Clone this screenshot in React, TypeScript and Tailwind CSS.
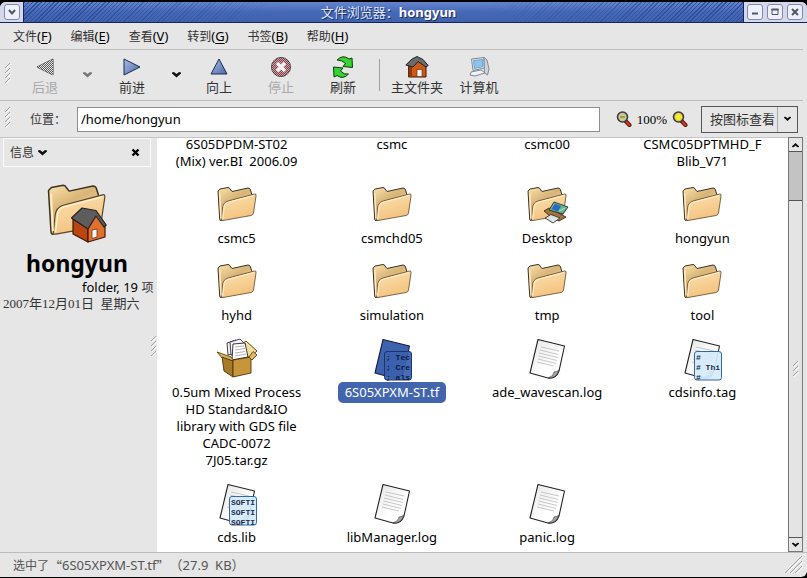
import React from "react";

type Kind = "folder" | "desktop" | "package" | "doc" | "tf" | "tag" | "lib";
type Entry = { name: string; kind: Kind; selected?: boolean };

const ENTRIES: Entry[] = [
  { name: "6S05DPDM-ST02\n(Mix) ver.BI  2006.09", kind: "folder" },
  { name: "csmc", kind: "folder" },
  { name: "csmc00", kind: "folder" },
  { name: "CSMC05DPTMHD_F\nBlib_V71", kind: "folder" },
  { name: "csmc5", kind: "folder" },
  { name: "csmchd05", kind: "folder" },
  { name: "Desktop", kind: "desktop" },
  { name: "hongyun", kind: "folder" },
  { name: "hyhd", kind: "folder" },
  { name: "simulation", kind: "folder" },
  { name: "tmp", kind: "folder" },
  { name: "tool", kind: "folder" },
  { name: "0.5um Mixed Process\nHD Standard&IO\nlibrary with GDS file\nCADC-0072\n7J05.tar.gz", kind: "package" },
  { name: "6S05XPXM-ST.tf", kind: "tf", selected: true },
  { name: "ade_wavescan.log", kind: "doc" },
  { name: "cdsinfo.tag", kind: "tag" },
  { name: "cds.lib", kind: "lib" },
  { name: "libManager.log", kind: "doc" },
  { name: "panic.log", kind: "doc" },
];

const MENUS = [
  ["文件", "F"],
  ["编辑", "E"],
  ["查看", "V"],
  ["转到", "G"],
  ["书签", "B"],
  ["帮助", "H"],
];

function FolderShape() {
  return (
    <g strokeLinejoin="round" strokeWidth="1">
      <path d="M1 5 L3 3 L11 1.500 Q12.500 1.500 13 3 L15 5.500 L31 2 Q33 2 33.500 4 L35 9 L8 33 L4 34.500 Q3 35 2.700 33 Z" fill="url(#folderBack)" stroke="#3a3024" />
      <path d="M5.500 22 Q6 16.500 11 15 L37.500 8 Q39.500 7.500 39 10 L36.500 27 Q36.200 29 34 29.500 L6 34.500 Q4 35 4.300 33 Z" fill="url(#folderFront)" stroke="#5a4528" strokeWidth="0.800" />
      <path d="M5.800 33 L7.300 20 Q8 17 11.500 16.200 L37 9.500" fill="none" stroke="#fff3d8" strokeWidth="0.900" />
      <path d="M2.700 7 L4 32.500" fill="none" stroke="#fdebc6" strokeWidth="1.400" />
    </g>
  );
}

function Defs() {
  return (
    <svg width="0" height="0" className="absolute" aria-hidden="true">
      <defs>
        <linearGradient id="folderBack" x1="0" y1="0" x2="0.6" y2="1">
          <stop offset="0" stopColor="#fbe3ad" />
          <stop offset="0.45" stopColor="#d8b477" />
          <stop offset="1" stopColor="#f7dfae" />
        </linearGradient>
        <linearGradient id="folderFront" x1="0.2" y1="0" x2="0.6" y2="1">
          <stop offset="0" stopColor="#fbe0ad" />
          <stop offset="1" stopColor="#f3c07c" />
        </linearGradient>
        <linearGradient id="arrowBlue" x1="0" y1="0" x2="1" y2="1">
          <stop offset="0" stopColor="#a9bde3" />
          <stop offset="1" stopColor="#4a68a8" />
        </linearGradient>
        <linearGradient id="paper" x1="0" y1="0" x2="1" y2="1">
          <stop offset="0" stopColor="#e4e4e4" />
          <stop offset="0.6" stopColor="#ffffff" />
        </linearGradient>
        <pattern id="dots" width="2" height="2" patternUnits="userSpaceOnUse">
          <rect width="1" height="1" fill="#e6e6e6" />
          <rect x="1" y="1" width="1" height="1" fill="#e6e6e6" />
        </pattern>
      </defs>
    </svg>
  );
}

function EntryIcon({ kind }: { kind: Kind }) {
  if (kind === "folder" || kind === "desktop") {
    return (
      <svg width="48" height="48" viewBox="0 0 48 48">
        <g transform="translate(4 4)"><FolderShape /></g>
        {kind === "desktop" && (
          <g strokeLinejoin="round" strokeWidth="0.9">
            <path d="M21 29 L26 26 L43 35 L36 39 L28 35 Z" fill="#a8713c" stroke="#3b2816" />
            <path d="M26 28 L31 20 L45 25 L40 32 Z" fill="#5fb98c" stroke="#24303c" />
            <path d="M28.500 27 L32 21.700 L38 24 L35 29.500 Z" fill="#2e66c4" />
            <path d="M36 29 L42 26" stroke="#b6ecc8" />
            <path d="M22 36 L28 32.500 L37 36 L30 41 Z" fill="#dfe3e6" stroke="#333" />
          </g>
        )}
      </svg>
    );
  }
  if (kind === "package") {
    return (
      <svg width="48" height="48" viewBox="0 0 48 48" strokeLinejoin="round" strokeWidth="0.9">
        <path d="M27 9 L33 5 L44 15 L36 22 Z" fill="#f3dc9c" stroke="#4b3a18" />
        <path d="M14 7 L23 4 L25 17 L15 19 Z" fill="#f6efe2" stroke="#2d2d2d" />
        <path d="M17 6 L27 3 L32 8 L27 18 L18 19 Z" fill="#f1f1f6" stroke="#3a2d5c" />
        <path d="M20 8 L32 7 L35 21 L19 24 Z" fill="#fff" stroke="#222" />
        <path d="M22 11 L31 10 M22 14 L32 12.500 M22 17 L32 15.500 M22 20 L33 18" stroke="#aaa" />
        <path d="M4 16 L18 21 L21 25 L10 23 Z" fill="#d9b35c" stroke="#5a4212" />
        <path d="M9 21 L20 25 L20 41 L11 35 Z" fill="#a87a2a" stroke="#4b360e" />
        <path d="M20 24 L38 21 L38 37 L20 41 Z" fill="#c8963a" stroke="#4b360e" />
        <path d="M36 21 L40 15.500 L44 19 L39 24 Z" fill="#e0b963" stroke="#5a4212" />
      </svg>
    );
  }
  const selected = kind === "tf";
  const lines: Record<string, string[]> = {
    tf: ["; Tec", "; Cre", "; als"],
    tag: ["#", "# Thi", "#"],
    lib: ["SOFTI", "SOFTI", "SOFTI"],
  };
  const snippet = lines[kind];
  return (
    <svg width="48" height="48" viewBox="0 0 48 48">
      <path
        d="M15 3.500 L41.500 10 L36 35 Q33 43 25 42 L7 37 Z"
        fill={selected ? "#3f62ae" : "url(#paper)"}
        stroke={selected ? "#111e40" : "#222"}
        strokeWidth="1.1"
        strokeLinejoin="round"
      />
      {!selected && (
        <>
          <path d="M18 11 L36 15 M17 14 L35 18.500 M16 17 L35 21.500 M15.500 20 L34 24.500 M15 23 L33 27.500 M14 26 L31 30" stroke="#c0c0c0" strokeWidth="0.9" />
          <path d="M25 42 Q31 40 31 36 Q34 36 36 34 Q33 43 25 42Z" fill="#a5a5a5" stroke="#333" strokeWidth="0.6" />
        </>
      )}
      {snippet && (
        <svg x="16" y="15" width="28" height="30" viewBox="0 0 28 30">
          <rect x="0.5" y="0.5" width="27" height="28.500" rx="2.500" fill={selected ? "#3b5fae" : "#d6eafb"} fillOpacity="0.92" stroke={selected ? "#1c3470" : "#2f6ba5"} />
          {snippet.map((line, i) => (
            <text key={i} x={2} y={9 + i * 10} xmlSpace="preserve" className="font-['Liberation_Mono',monospace] text-[8px] font-bold" fill={selected ? "#0d1a44" : "#1b2f4a"}>
              {line}
            </text>
          ))}
        </svg>
      )}
    </svg>
  );
}

function Grip({ h = 24 }: { h?: number }) {
  return (
    <svg width="6" height={h} viewBox={`0 0 6 ${h}`} aria-hidden="true">
      {Array.from({ length: Math.floor(h / 5) }, (_, i) => (
        <g key={i}>
          <path d={`M0 ${i * 5 + 5} L5 ${i * 5}`} stroke="#a2a2a2" />
          <path d={`M1 ${i * 5 + 6} L6 ${i * 5 + 1}`} stroke="#fff" />
        </g>
      ))}
    </svg>
  );
}

function Chevron({ color = "#111", size = 9 }: { color?: string; size?: number }) {
  return (
    <svg width={size} height="6" viewBox="0 0 9 6" aria-hidden="true">
      <path d="M0 0.500 L2 0 L4.500 2 L7 0 L9 0.500 V1.500 L4.500 5.500 L0 1.500 Z" fill={color} />
    </svg>
  );
}

function WindowButton({ label, children }: { label: string; children: React.ReactNode }) {
  return (
    <button aria-label={label} className="flex size-4 items-center justify-center rounded-[3px] border border-[#8289a8] bg-[#eef0f9]">
      <svg width="10" height="10" viewBox="0 0 10 10" fill="none" stroke="#50556c" strokeWidth="2">{children}</svg>
    </button>
  );
}

function Tool({ label, disabled, className, children }: { label: string; disabled?: boolean; className: string; children: React.ReactNode }) {
  return (
    <button disabled={disabled} className={`flex flex-col items-center text-[#333] disabled:text-[#a9a9a9] ${className}`}>
      <svg width="24" height="24" viewBox="0 0 24 24" strokeLinejoin="round">{children}</svg>
      <span className="whitespace-nowrap text-[13px] leading-4">{label}</span>
    </button>
  );
}

function Magnifier({ plus }: { plus?: boolean }) {
  return (
    <svg width="16" height="16" viewBox="0 0 16 16">
      <path d="M10 10.500 L13.500 14" stroke="#4a0f08" strokeWidth="4" strokeLinecap="round" />
      <path d="M10.500 11 L13.500 14" stroke="#d33a22" strokeWidth="2.400" strokeLinecap="round" />
      <circle cx="6.500" cy="6" r="5" fill={plus ? "#dcd05a" : "#c5c9a4"} stroke="#3a3a3a" strokeWidth="1.600" />
      {plus ? (
        <path d="M6.500 3 V9 M3.500 6 H9.500" stroke="#fff21c" strokeWidth="2.400" />
      ) : (
        <path d="M4 6 H9" stroke="#a8a02c" strokeWidth="1.800" />
      )}
    </svg>
  );
}

const HATCH = "w-[36%] bg-[repeating-linear-gradient(135deg,#2f4f9a_0px,#2f4f9a_1px,transparent_1px,transparent_3px)]";

export default function App() {
  return (
    <div className="flex h-screen flex-col overflow-hidden bg-black pt-0.5 pb-px font-['Noto_Sans','Noto_Sans_CJK_SC',sans-serif] text-[13px] leading-[17px] text-black select-none">
      <Defs />
      <div className="flex min-h-0 flex-1 flex-col overflow-hidden rounded-t-md rounded-br-md bg-[#e6e6e6]">
        <header className="flex h-[21px] shrink-0 border-b border-[#14255c] bg-[#d3d8eb]">
          <div className="flex w-6 items-center justify-center border-r border-[#14255c]">
            <WindowButton label="窗口菜单"><path d="M2 3 L5 6.500 L8 3" /></WindowButton>
          </div>
          <div className="relative flex flex-1 items-center justify-center bg-linear-to-b from-[#6485cd] via-[#4768b6] to-[#4162ac]">
            <div className={`absolute inset-y-0 left-0 mask-r-from-20% ${HATCH}`} />
            <div className={`absolute inset-y-0 right-0 mask-l-from-20% ${HATCH}`} />
            <h1 className="relative pl-2.5 text-[13px] text-white [text-shadow:1px_1px_0_#1c2f66]">
              <span className="text-[#dfe6f8]">文件浏览器：</span><b>hongyun</b>
            </h1>
          </div>
          <div className="flex items-center gap-1 border-l border-[#14255c] pr-1 pl-[3px]">
            <WindowButton label="最小化"><path d="M2 6.500 H8" /></WindowButton>
            <WindowButton label="最大化"><path d="M1.500 2.500 H8.500" /><path d="M2 2 V7.500 H8 V2" strokeWidth="1" /></WindowButton>
            <WindowButton label="关闭"><path d="M2 2 L8 8 M8 2 L2 8" /></WindowButton>
          </div>
        </header>

        <nav className="mr-1 flex h-[27px] shrink-0 items-center gap-[19px] border-b border-[#bcbcbc] pl-[13px]">
          {MENUS.map(([name, key]) => (
            <button key={key} className="whitespace-nowrap">
              <span className="text-[12px] text-[#333]">{name}</span>(<u className="underline-offset-2">{key}</u>)
            </button>
          ))}
        </nav>

        <div className="mr-1 flex h-[51px] shrink-0 items-center border-b border-[#bcbcbc] pl-[5px]">
          <Grip />
          <Tool label="后退" disabled className="ml-5 w-7">
            <path d="M4 12 L20 4 V20 Z" fill="#5c5c5c" stroke="#444" />
            <path d="M4 12 L20 4 V20 Z" fill="url(#dots)" />
          </Tool>
          <button aria-label="后退历史" disabled className="ml-6"><Chevron color="#777" /></button>
          <Tool label="前进" className="ml-6 w-8">
            <path d="M4 4 L20 12 L4 20 Z" fill="url(#arrowBlue)" stroke="#1b2b50" />
          </Tool>
          <button aria-label="前进历史" className="ml-6"><Chevron /></button>
          <Tool label="向上" className="ml-[22px] w-8">
            <path d="M12 4 L20 19 H4 Z" fill="url(#arrowBlue)" stroke="#1b2b50" />
          </Tool>
          <Tool label="停止" disabled className="ml-[30px] w-8">
            <circle cx="12" cy="12" r="9.500" fill="#8c3f48" stroke="#333" />
            <circle cx="12" cy="12" r="9.500" fill="url(#dots)" fillOpacity="0.600" />
            <path d="M8 8 L16 16 M16 8 L8 16" stroke="#f3f3f3" strokeWidth="3.500" />
          </Tool>
          <Tool label="刷新" className="ml-[30px] w-8">
            <path d="M6 5 Q12 -1 18 4 L21 3 L21.500 12.500 L12 11.500 L14.500 8.500 Q11 5 6 5 Z" fill="#37d332" stroke="#0b3d0a" />
            <path d="M17.500 19 Q12 25 6 20.500 L3 22 L2.500 12 L12 13 L9.500 16 Q13 20 17.500 19 Z" fill="#37d332" stroke="#0b3d0a" />
          </Tool>
          <div className="ml-5 h-8 w-px bg-[#a0a0a0]" />
          <Tool label="主文件夹" className="ml-[11px] w-[52px]">
            <path d="M3.500 9 L12.500 5 L21 9 V22 H3.500 Z" fill="#cf5a18" stroke="#3c1804" />
            <path d="M3.500 9 L7 10 V22 H3.500 Z" fill="#8f3a0c" />
            <rect x="12" y="14.500" width="5" height="7" fill="#f4f4f4" stroke="#5a2408" strokeWidth="0.600" />
            <path d="M0.800 10 L7 4 L12 1.500 L18 4.500 L23.200 10.500 L21 12 L13 6.500 L8 12 Z" fill="#6b6b6b" stroke="#222" />
          </Tool>
          <Tool label="计算机" className="ml-[10px] w-[52px]">
            <path d="M4.500 4 L17 2.500 L17.500 13 L6 15.500 Z" fill="#e2e8ee" stroke="#7d8a96" />
            <path d="M6.500 5.500 L15.500 4.500 L16 11.500 L7.500 13.500 Z" fill="#8cc4f0" stroke="#5c8cb8" strokeWidth="0.700" />
            <path d="M17 2.500 L20 5 L22 14 L20.500 20 L17.500 18 Z" fill="#cdd4da" stroke="#7d8a96" />
            <path d="M4 17 L14 15 L18 18 L8 21 L3 20 Z" fill="#f1f3f6" stroke="#7d8a96" />
          </Tool>
        </div>

        <div className="flex h-9 shrink-0 items-center pr-[9px] pl-[5px]">
          <Grip />
          <label htmlFor="location" className="ml-[19px] w-[47px] text-[12px] text-[#333]">位置：</label>
          <input id="location" defaultValue="/home/hongyun" className="h-[25px] min-w-0 flex-1 border border-[#8e8e8e] bg-white px-[3px]" />
          <button aria-label="缩小" className="ml-4"><Magnifier /></button>
          <span className="mx-[5px] font-['Liberation_Serif',serif] text-[13px]">100%</span>
          <button aria-label="放大"><Magnifier plus /></button>
          <div className="relative ml-[13px] h-[27px] w-[97px] border border-[#555]">
            <select aria-label="查看方式" className="h-full w-full appearance-none pl-2 text-[13px] text-[#333]">
              <option>按图标查看</option>
            </select>
            <span className="pointer-events-none absolute inset-y-0 right-0 flex w-5 items-center justify-center border-l border-[#aaa]">
              <Chevron size={7} />
            </span>
          </div>
        </div>

        <main className="flex min-h-0 flex-1 pr-1">
          <aside className="relative flex w-[157px] shrink-0 flex-col overflow-hidden border-t border-[#c4c4c4] pr-1.5 pl-[3px]">
            <div className="flex h-[29px] w-full shrink-0 items-center border border-[#fafafa] px-1.5">
              <button className="flex items-center gap-1 text-[12px] text-[#333]">信息 <Chevron /></button>
              <button aria-label="关闭侧栏" className="ml-auto mr-1">
                <svg width="9" height="9" viewBox="0 0 9 9"><path d="M1.500 1.500 L7.500 7.500 M7.500 1.500 L1.500 7.500" stroke="#000" strokeWidth="2.400" /></svg>
              </button>
            </div>
            <svg width="60" height="62" viewBox="0 0 60 62" className="mt-4 shrink-0 self-center">
              <g transform="scale(1.48)"><FolderShape /></g>
              <g strokeLinejoin="round" strokeWidth="1.200">
                <path d="M26 36 L41 45 L41 59 L26 51 Z" fill="#b9450f" stroke="#3c1804" />
                <path d="M41 45 L49 30 L58 42 L58 54 L41 59 Z" fill="#e2702c" stroke="#3c1804" />
                <path d="M45 47 L50 46 V54 L45 55.500 Z" fill="#f5f5f5" stroke="#5a2408" strokeWidth="0.700" />
                <path d="M24.500 35 L35 25 L49 27.500 L59.200 42 L57 44 L49 33 L41 46 Z" fill="#5d5d5d" stroke="#222" />
              </g>
            </svg>
            <h2 className="mt-0.5 text-center text-[23px] leading-8 font-bold">hongyun</h2>
            <p className="ml-[79px] whitespace-nowrap leading-[17px]">folder, 19 <span className="text-[12px] text-[#333]">项</span></p>
            <p className="whitespace-nowrap font-['Liberation_Serif','Noto_Sans_CJK_SC',serif] text-[13px] leading-[15px] text-[#333]">2007年12月01日&nbsp; 星期六</p>
            <span className="absolute right-0 bottom-48"><Grip /></span>
          </aside>

          <section id="files" className="flex min-w-0 flex-1 flex-col justify-end overflow-hidden border-t border-[#c4c4c4] bg-white pr-2 pb-1.5 pl-0.5">
            <ul className="grid shrink-0 grid-cols-4 gap-y-3">
              {ENTRIES.map((e) => (
                <li key={e.name} className="flex flex-col items-center">
                  <EntryIcon kind={e.kind} />
                  <span className={e.selected ? "-my-0.5 rounded-[5px] bg-[#4265ae] px-[7px] py-0.5 text-white" : "text-center whitespace-pre"}>{e.name}</span>
                </li>
              ))}
            </ul>
          </section>

          <div className="flex w-[15px] shrink-0 flex-col border border-[#777] bg-[#c3c3c3]" role="scrollbar" aria-controls="files" aria-valuenow={100}>
            <button aria-label="向上滚动" className="flex h-3.5 shrink-0 items-center justify-center border-b border-[#555] bg-[#e6e6e6]">
              <span className="rotate-180"><Chevron size={7} /></span>
            </button>
            <div className="mt-12 flex flex-1 items-center justify-center border-t border-[#555] bg-[#e4e4e4]"><Grip h={16} /></div>
            <button aria-label="向下滚动" className="flex h-3.5 shrink-0 items-center justify-center border-t border-[#555] bg-[#e6e6e6]">
              <Chevron size={7} />
            </button>
          </div>
        </main>

        <footer className="flex h-[25px] shrink-0 items-center border-t border-[#bcbcbc] pl-[13px] text-[13px] text-[#555]">
          <span className="text-[12px]">选中了</span>
          <span className="font-['Noto_Sans_CJK_SC',sans-serif]">“</span>
          <span>6S05XPXM-ST.tf</span>
          <span className="font-['Noto_Sans_CJK_SC',sans-serif]">”</span>
          <span>（27.9&nbsp; KB）</span>
          <svg width="18" height="18" viewBox="0 0 18 18" className="mr-1 ml-auto">
            <path d="M0 17 L17 0 M5 17 L17 5 M10 17 L17 10" stroke="#a2a2a2" />
            <path d="M1 18 L18 1 M6 18 L18 6 M11 18 L18 11" stroke="#fff" />
          </svg>
        </footer>
      </div>
    </div>
  );
}
